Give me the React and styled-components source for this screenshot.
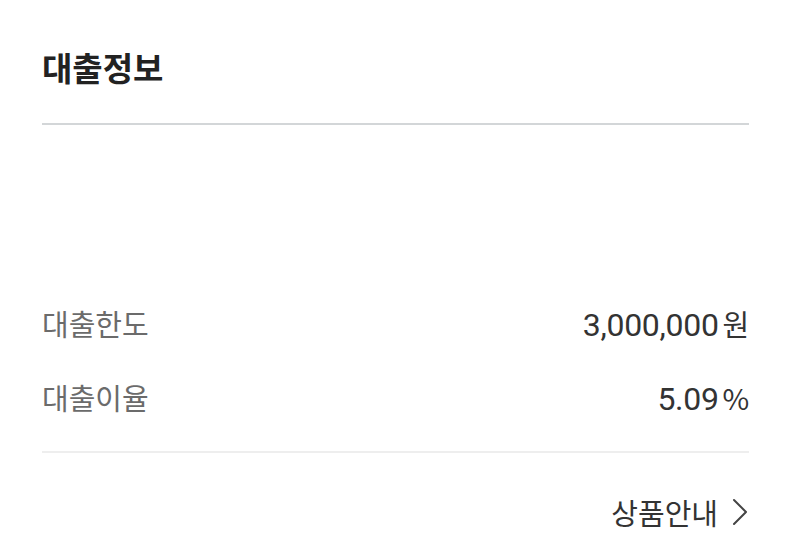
import React from 'react';
import styled, { createGlobalStyle } from 'styled-components';

const GlobalStyle = createGlobalStyle`
	body {
		margin: 0;
		background: #ffffff;
		font-family: Roboto, 'Noto Sans CJK KR', sans-serif;
	}
`;

const rows = [
	{ label: '대출한도', value: '3,000,000', unit: '원' },
	{ label: '대출이율', value: '5.09', unit: '%' },
];

const App = () => {
	return (
		<>
			<GlobalStyle />
			<Wrapper>
				<Title>대출정보</Title>
				<Rows>
					{rows.map((row) => (
						<Row key={row.label}>
							<Label>{row.label}</Label>
							<Value>
								{row.value}
								<Unit>{row.unit}</Unit>
							</Value>
						</Row>
					))}
				</Rows>
				<Footer>
					<GuideLink href="#">
						상품안내
						<svg width="16" height="28" viewBox="0 0 16 28" fill="none">
							<path d="M2 2 L14 14 L2 26" stroke="#444" strokeWidth="2" strokeLinecap="round" strokeLinejoin="round" />
						</svg>
					</GuideLink>
				</Footer>
			</Wrapper>
		</>
	);
};

const Wrapper = styled.div`
	width: 707px;
	margin: 0 0 0 42px;
	padding-top: 46px;
`;

const Title = styled.h2`
	margin: 0;
	padding-bottom: 35px;
	border-bottom: 2px solid #d3d6d8;
	font-family: 'Noto Sans CJK KR', sans-serif;
	font-size: 33px;
	font-weight: 700;
	line-height: 42px;
	color: #222;
`;

const Rows = styled.div`
	display: flex;
	flex-direction: column;
	gap: 36px;
	padding: 179px 0 35px;
	border-bottom: 2px solid #eeeeee;
`;

const Row = styled.div`
	display: flex;
	align-items: center;
	justify-content: space-between;
	height: 38px;
`;

const Label = styled.span`
	font-family: 'Noto Sans CJK KR', sans-serif;
	font-size: 29px;
	color: #6b6b6b;
`;

const Value = styled.span`
	font-family: Roboto, 'Noto Sans CJK KR', sans-serif;
	font-size: 32px;
	color: #333;
	letter-spacing: -0.3px;
`;

const Unit = styled.span`
	margin-left: 4px;
	font-family: 'Noto Sans CJK KR', sans-serif;
	font-size: 29px;
`;

const Footer = styled.div`
	display: flex;
	justify-content: flex-end;
	padding-top: 40px;
`;

const GuideLink = styled.a`
	display: flex;
	align-items: center;
	gap: 14px;
	font-family: 'Noto Sans CJK KR', sans-serif;
	font-size: 29px;
	line-height: 38px;
	color: #333;
	text-decoration: none;
	svg {
		margin-right: 1px;
	}
`;

export default App;
